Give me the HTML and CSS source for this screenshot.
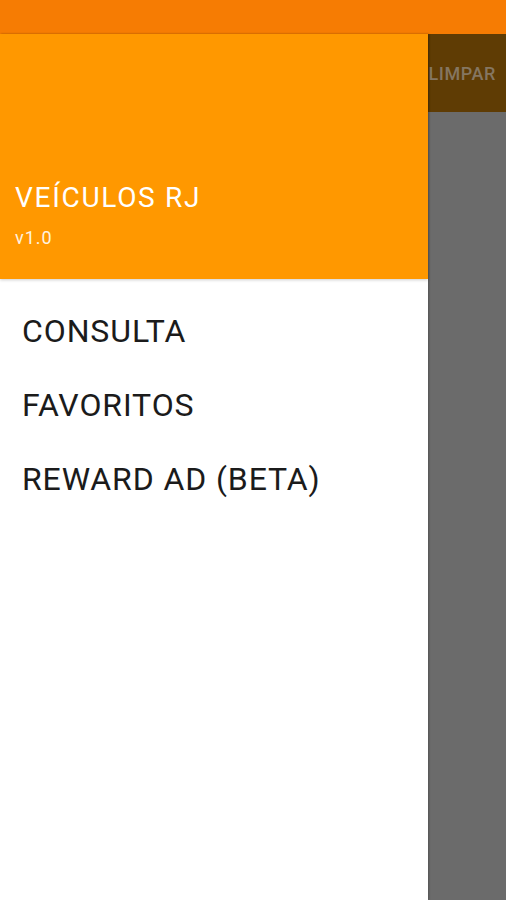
FILE: index.html
```html
<!DOCTYPE html>
<html>
<head>
<meta charset="utf-8">
<link rel="stylesheet" href="styles.css">
</head>
<body>
<div class="status"></div>
<div class="main">
  <aside class="drawer">
    <header class="drawer-header">
      <div class="title">VEÍCULOS RJ</div>
      <div class="version">v1.0</div>
    </header>
    <nav class="menu">
      <div class="item">CONSULTA</div>
      <div class="item">FAVORITOS</div>
      <div class="item">REWARD AD (BETA)</div>
    </nav>
  </aside>
  <section class="scrim">
    <div class="toolbar"><span class="action">LIMPAR</span></div>
    <div class="content"></div>
  </section>
</div>
</body>
</html>
```
FILE: styles.css
```css
html, body {
  margin: 0;
  padding: 0;
  width: 506px;
  height: 900px;
  overflow: hidden;
  font-family: Roboto, "Liberation Sans", sans-serif;
}
.status {
  height: 34px;
  background: #f67c03;
}
.main {
  display: flex;
  height: 866px;
}
.drawer {
  width: 428px;
  flex: 0 0 428px;
  background: #fff;
  display: flex;
  flex-direction: column;
  position: relative;
  z-index: 2;
  box-shadow: 1px 0 2px rgba(0,0,0,0.25);
}
.drawer-header {
  height: 245px;
  background: #ff9800;
  box-sizing: border-box;
  padding: 148px 0 0 15px;
  color: #fff;
  box-shadow: 0 1px 3px rgba(0,0,0,0.2);
}
.title {
  font-size: 28px;
  line-height: 32px;
  letter-spacing: 1.7px;
}
.version {
  font-size: 18px;
  line-height: 20px;
  margin-top: 14px;
  letter-spacing: 1px;
  color: #fff3e0;
}
.menu {
  padding-top: 15px;
}
.item {
  font-size: 32px;
  line-height: 74px;
  padding-left: 22px;
  letter-spacing: 0.9px;
  color: #1b1b1b;
}
.scrim {
  flex: 1;
  display: flex;
  flex-direction: column;
  overflow: hidden;
}
.toolbar {
  height: 78px;
  background: #5f3c04;
  display: flex;
  align-items: center;
  justify-content: flex-end;
  padding-right: 10px;
  white-space: nowrap;
}
.action {
  font-size: 18px;
  font-weight: 500;
  letter-spacing: 0.6px;
  color: #857661;
}
.content {
  flex: 1;
  background: #6b6b6b;
}
```
